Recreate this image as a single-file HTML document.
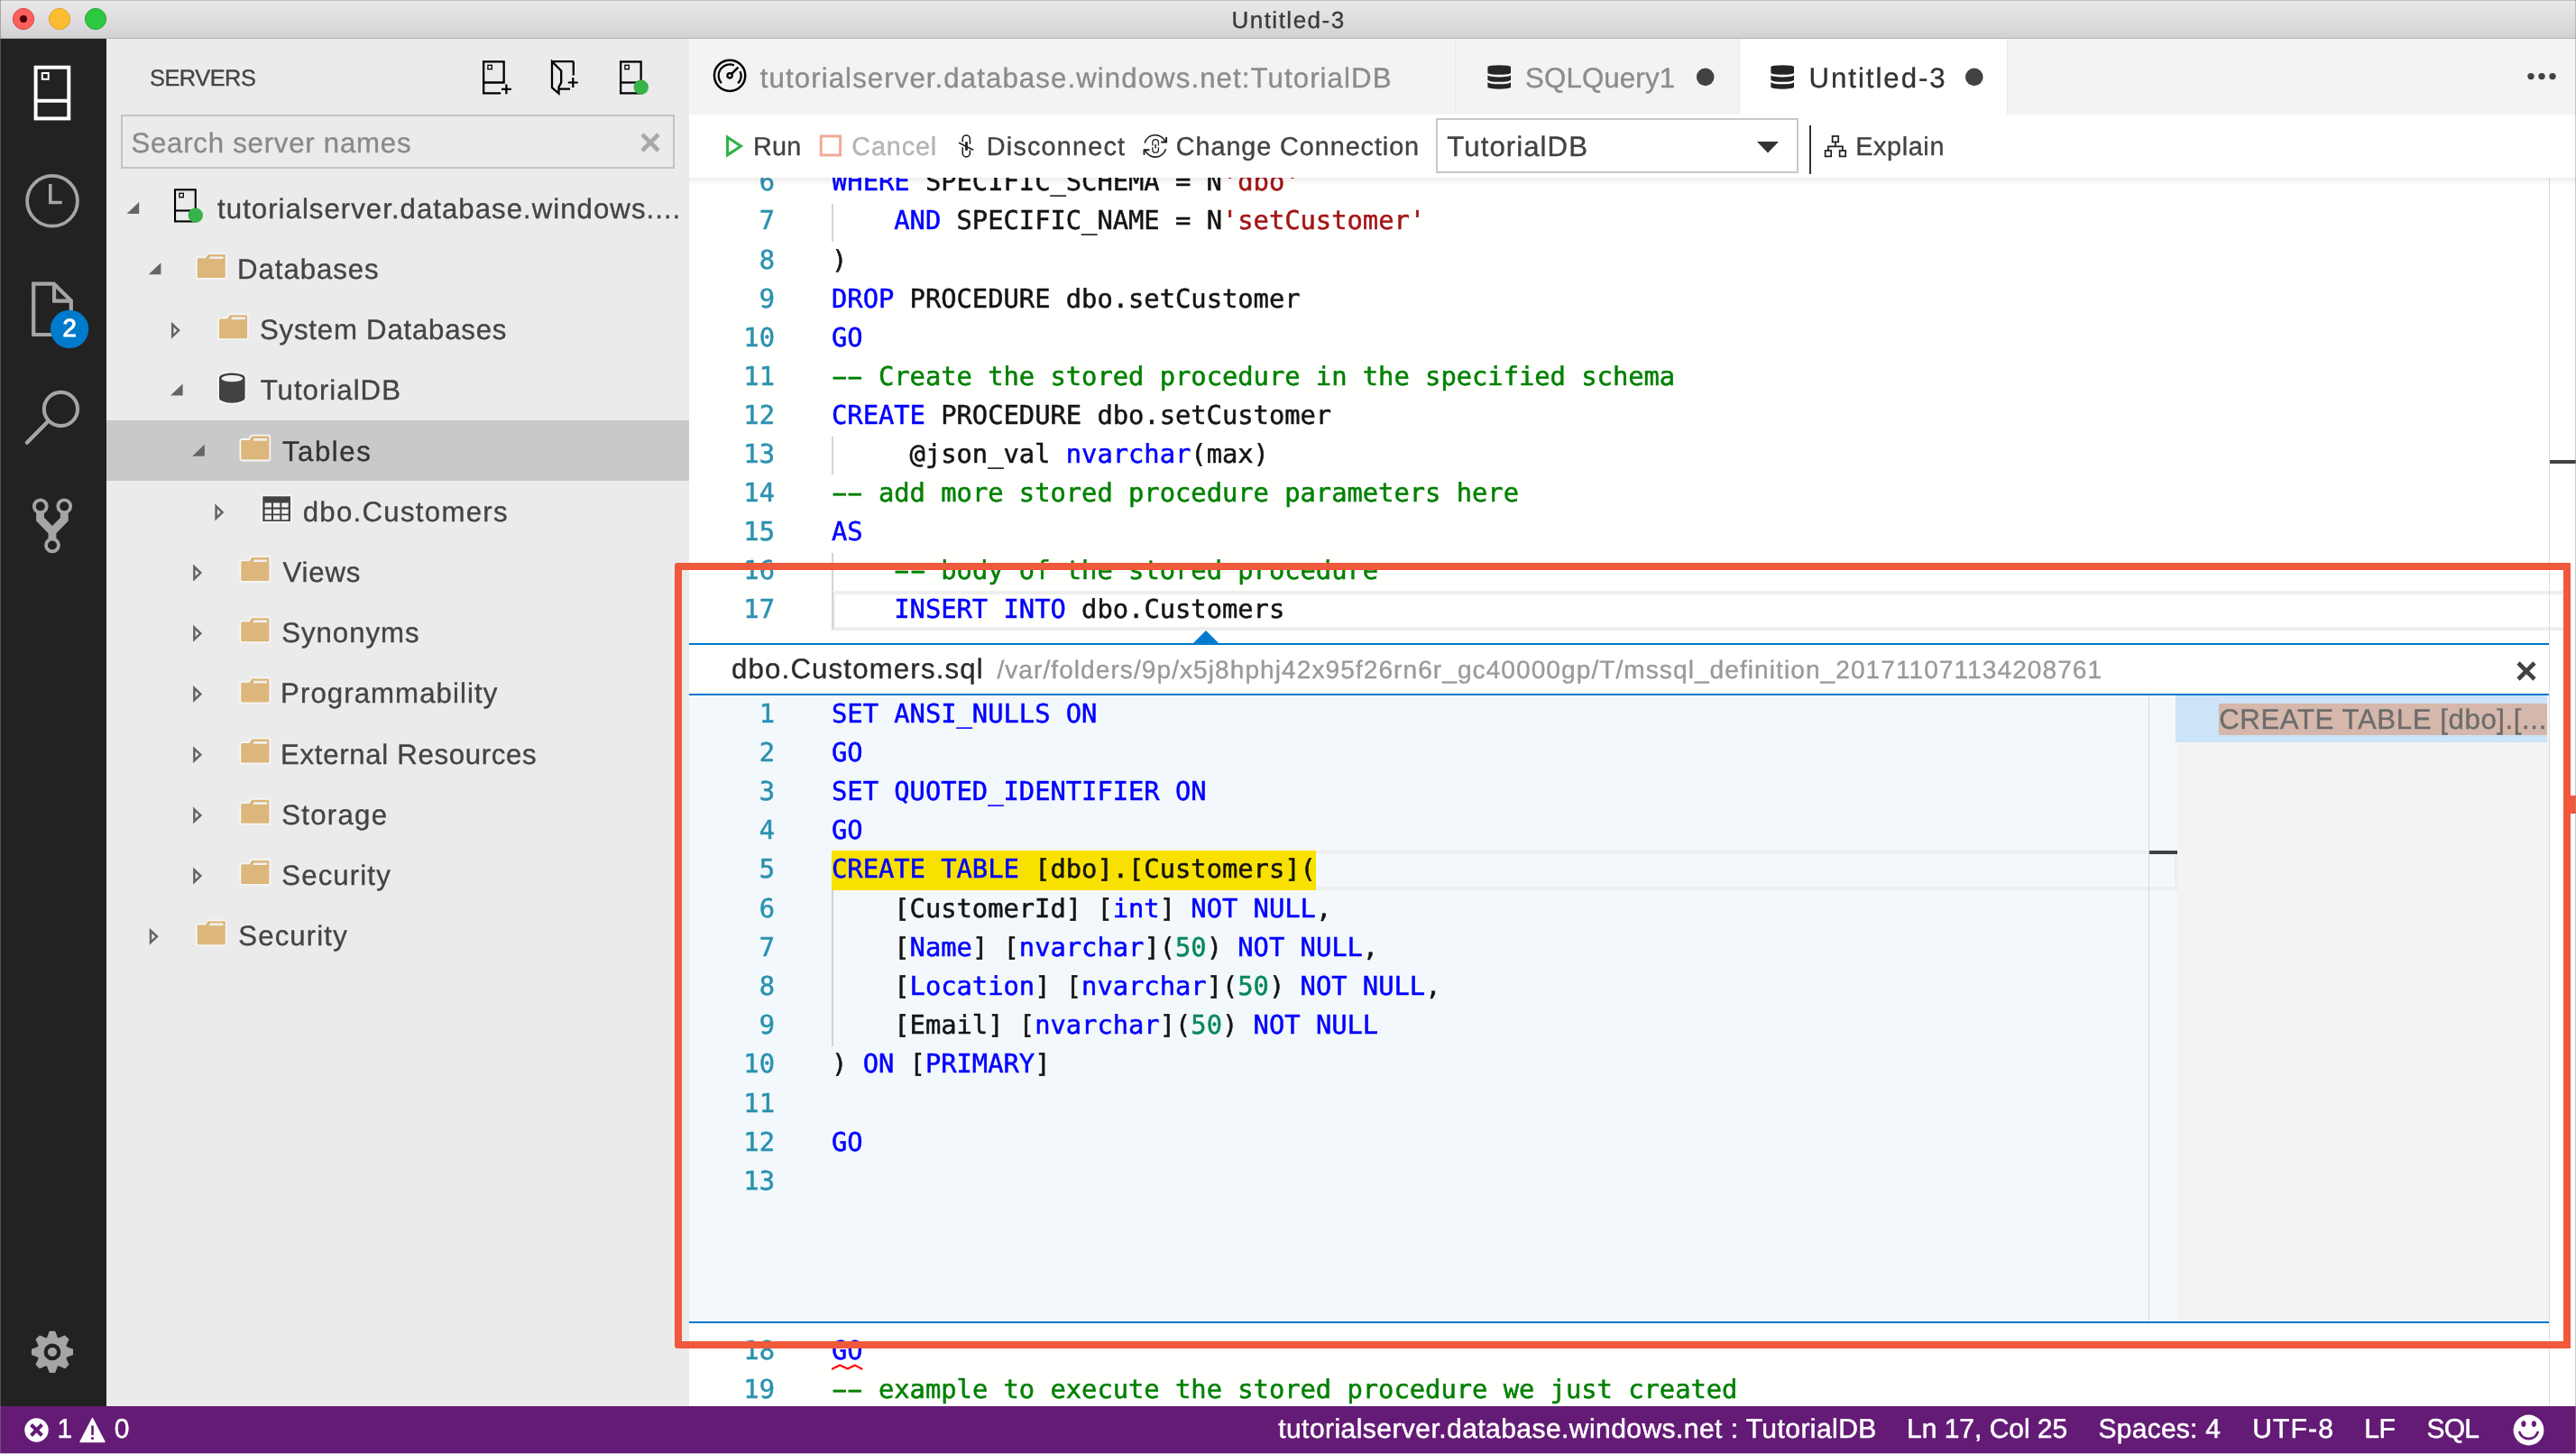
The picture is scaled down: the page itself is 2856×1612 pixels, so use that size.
<!DOCTYPE html>
<html lang="en"><head><meta charset="utf-8"><title>Untitled-3</title>
<style>
*{box-sizing:border-box}
#root{position:absolute;left:0;top:0;width:2856px;height:1612px;will-change:transform}
html,body{margin:0;padding:0}
body{width:2856px;height:1612px;overflow:hidden;background:#fffffe;position:relative;
 font-family:"Liberation Sans",sans-serif;-webkit-font-smoothing:antialiased;text-rendering:geometricPrecision}
.a{position:absolute;display:block}
.t{position:absolute;white-space:pre;line-height:1;-webkit-text-stroke-width:0.35px}
.u{font-family:"Liberation Sans",sans-serif}
.b{font-weight:bold}
.sb{-webkit-text-stroke:0.55px #fff}
.m{font-family:"DejaVu Sans Mono","Liberation Mono",monospace}
.cl{position:absolute;left:922px;white-space:pre;font-family:"DejaVu Sans Mono","Liberation Mono",monospace;
 font-size:28.8px;line-height:43px;height:43px;color:#141414;letter-spacing:-0.02px;-webkit-text-stroke-width:0.5px}
.ln{position:absolute;left:764px;width:95px;text-align:right;white-space:pre;
 font-family:"DejaVu Sans Mono","Liberation Mono",monospace;font-size:28.8px;line-height:43px;height:43px;color:#2b91af;-webkit-text-stroke-width:0.5px}
.hy{display:inline-block;transform:scaleX(1.85)}
.k{color:#0000ff}.s{color:#a31515}.c{color:#008000}.n{color:#09885a}
</style></head>
<body>
<div id="root">
<div class="a" style="left:0px;top:43px;width:118px;height:1517px;background:#222222;"></div>
<svg class="a" style="left:0px;top:0px;" width="118" height="1560" viewBox="0 0 118 1560"><rect x="39.6" y="74.7" width="36.7" height="56.7" fill="none" stroke="#fff" stroke-width="4"/><line x1="39" y1="111.8" x2="77" y2="111.8" stroke="#fff" stroke-width="4"/><rect x="46.8" y="81" width="6.9" height="6.8" fill="none" stroke="#fff" stroke-width="2"/><circle cx="58" cy="222.8" r="27.9" fill="none" stroke="#a5a5a5" stroke-width="3.8"/><path d="M55.8,204 V224.5 H68.8" fill="none" stroke="#a5a5a5" stroke-width="3.6"/><path d="M37.2,314.6 H59.7 L78.8,333.4 V371 H37.2 Z M60.1,314.6 V333.7 H78.8" fill="none" stroke="#a5a5a5" stroke-width="4.2" stroke-linejoin="miter"/><circle cx="77.1" cy="364.9" r="21.2" fill="#007acc"/><circle cx="67.45" cy="453.5" r="18.6" fill="none" stroke="#a5a5a5" stroke-width="4.1"/><line x1="29.9" y1="490.8" x2="53.6" y2="466.7" stroke="#a5a5a5" stroke-width="4.4" stroke-linecap="round"/><path d="M44.55,566 V575.75 L57.95,589.3 L71.3,575.75 V566 M57.95,589.3 V600" fill="none" stroke="#a5a5a5" stroke-width="8.9" stroke-linejoin="miter"/><circle cx="44.8" cy="561.3" r="6.96" fill="#222" stroke="#a5a5a5" stroke-width="3.8"/><circle cx="71.25" cy="561.3" r="6.96" fill="#222" stroke="#a5a5a5" stroke-width="3.8"/><circle cx="58" cy="604.5" r="6.96" fill="#222" stroke="#a5a5a5" stroke-width="3.8"/><path d="M52.77,1483.36 L55.26,1476.57 L60.74,1476.57 L63.23,1483.36 L65.29,1484.21 L71.85,1481.17 L75.73,1485.05 L72.69,1491.61 L73.54,1493.67 L80.33,1496.16 L80.33,1501.64 L73.54,1504.13 L72.69,1506.19 L75.73,1512.75 L71.85,1516.63 L65.29,1513.59 L63.23,1514.44 L60.74,1521.23 L55.26,1521.23 L52.77,1514.44 L50.71,1513.59 L44.15,1516.63 L40.27,1512.75 L43.31,1506.19 L42.46,1504.13 L35.67,1501.64 L35.67,1496.16 L42.46,1493.67 L43.31,1491.61 L40.27,1485.05 L44.15,1481.17 L50.71,1484.21Z" fill="#a5a5a5" stroke="#a5a5a5" stroke-width="1.4" stroke-linejoin="round"/><circle cx="58.0" cy="1498.9" r="7.2" fill="#a5a5a5" stroke="#222" stroke-width="4.4"/></svg>
<span class="t u" style="left:69.5px;top:349.7px;font-size:27.6px;color:#fff;-webkit-text-stroke:1.1px #fff;">2</span>
<div class="a" style="left:118px;top:43px;width:646px;height:1517px;background:#ebebeb;"></div>
<span class="t u" style="left:166.0px;top:75.2px;font-size:25.4px;color:#444444;letter-spacing:-0.50px;">SERVERS</span>
<div class="a" style="left:134px;top:126.8px;width:614px;height:59.8px;border:2px solid #c3c3c3;"></div>
<span class="t u" style="left:145.4px;top:143.1px;font-size:31.2px;color:#8a8a8a;letter-spacing:0.76px;">Search server names</span>
<div class="a" style="left:118px;top:465.79999999999995px;width:646px;height:67.4px;background:#c9c9c9;"></div>
<svg class="a" style="left:118px;top:43px;" width="646" height="1517" viewBox="118 43 646 1517"><path d="M558.65,91.5 V68.45 H536.15 V103.35 H555.2 M535,91.5 H559.8" fill="none" stroke="#000" stroke-width="2.3"/><rect x="540.9" y="72.3" width="4.4" height="4.4" fill="none" stroke="#000" stroke-width="1.3"/><path d="M556,98.8 H566.8 M561.4,93.4 V104.2" stroke="#000" stroke-width="2.2"/><path d="M612,68.2 H634.5 Q635.8,68.2 635.8,69.5 V83.5 M612,68.2 L622.2,78.5 V91.5 L619.5,96.5 V103.6 L612,97.2 Z M620.5,98.6 H632" fill="none" stroke="#000" stroke-width="2.3" stroke-linejoin="miter"/><path d="M629.8,91.5 H640.8 M635.3,86 V97" stroke="#000" stroke-width="2.2"/><rect x="688.15" y="68.45" width="22.50" height="34.90" fill="none" stroke="#000" stroke-width="2.3"/><line x1="687.00" y1="91.50" x2="711.80" y2="91.50" stroke="#000" stroke-width="2.3"/><rect x="692.90" y="72.30" width="4.4" height="4.4" fill="none" stroke="#000" stroke-width="1.3"/><circle cx="710.80" cy="96.70" r="8.2" fill="#37b34a"/><path d="M712,149 L730,167 M730,149 L712,167" stroke="#a9a9a9" stroke-width="4.6"/><path d="M154.20,224.00 V237.00 H140.60 Z" fill="#646465"/><rect x="194.05" y="210.35" width="22.70" height="35.10" fill="none" stroke="#000" stroke-width="2.1"/><line x1="193.00" y1="233.50" x2="217.80" y2="233.50" stroke="#000" stroke-width="2.1"/><rect x="198.90" y="214.30" width="4.4" height="4.4" fill="none" stroke="#000" stroke-width="1.3"/><circle cx="216.80" cy="238.70" r="8.2" fill="#37b34a"/><path d="M178.40,291.20 V304.20 H164.80 Z" fill="#646465"/><g transform="translate(218.70,282.00)"><path d="M11.8,0 H30 Q31.1,0 31.1,1.1 V24.9 Q31.1,26 30,26 H1.1 Q0,26 0,24.9 V5.4 Q0,4.3 1.1,4.3 H9.3 Z" fill="#f6f6f6" stroke="#f6f6f6" stroke-width="3.6" stroke-linejoin="round"/><path d="M11.8,0 H30 Q31.1,0 31.1,1.1 V24.9 Q31.1,26 30,26 H1.1 Q0,26 0,24.9 V5.4 Q0,4.3 1.1,4.3 H9.3 Z" fill="#dcb67a"/><path d="M14.4,2.4 H28.75 V5.1 H13.1 Z" fill="#f0eff1"/></g><path d="M191.20,359.70 L198.10,366.30 L191.20,372.90 Z" fill="none" stroke="#646465" stroke-width="2.5" stroke-linejoin="miter"/><g transform="translate(243.00,349.20)"><path d="M11.8,0 H30 Q31.1,0 31.1,1.1 V24.9 Q31.1,26 30,26 H1.1 Q0,26 0,24.9 V5.4 Q0,4.3 1.1,4.3 H9.3 Z" fill="#f6f6f6" stroke="#f6f6f6" stroke-width="3.6" stroke-linejoin="round"/><path d="M11.8,0 H30 Q31.1,0 31.1,1.1 V24.9 Q31.1,26 30,26 H1.1 Q0,26 0,24.9 V5.4 Q0,4.3 1.1,4.3 H9.3 Z" fill="#dcb67a"/><path d="M14.4,2.4 H28.75 V5.1 H13.1 Z" fill="#f0eff1"/></g><path d="M202.60,425.60 V438.60 H189.00 Z" fill="#646465"/><g transform="translate(243.00,413.40)"><path d="M0,5.6 A14.3,5.6 0 0 1 28.6,5.6 V27.699999999999996 A14.3,5.6 0 0 1 0,27.699999999999996 Z" fill="#f6f6f6" stroke="#f6f6f6" stroke-width="3.4"/><path d="M0,5.6 A14.3,5.6 0 0 1 28.6,5.6 V27.699999999999996 A14.3,5.6 0 0 1 0,27.699999999999996 Z" fill="#424242"/><ellipse cx="14.3" cy="6.199999999999999" rx="11.9" ry="3.6999999999999997" fill="#f0eff1"/></g><path d="M226.80,492.80 V505.80 H213.20 Z" fill="#646465"/><g transform="translate(267.30,483.60)"><path d="M11.8,0 H30 Q31.1,0 31.1,1.1 V24.9 Q31.1,26 30,26 H1.1 Q0,26 0,24.9 V5.4 Q0,4.3 1.1,4.3 H9.3 Z" fill="#f6f6f6" stroke="#f6f6f6" stroke-width="3.6" stroke-linejoin="round"/><path d="M11.8,0 H30 Q31.1,0 31.1,1.1 V24.9 Q31.1,26 30,26 H1.1 Q0,26 0,24.9 V5.4 Q0,4.3 1.1,4.3 H9.3 Z" fill="#dcb67a"/><path d="M14.4,2.4 H28.75 V5.1 H13.1 Z" fill="#f0eff1"/></g><path d="M239.60,561.30 L246.50,567.90 L239.60,574.50 Z" fill="none" stroke="#646465" stroke-width="2.5" stroke-linejoin="miter"/><g transform="translate(291.30,550.30)"><rect x="-1.6" y="-1.6" width="33.9" height="30.9" fill="#f6f6f6"/><rect x="0" y="0" width="30.7" height="27.7" fill="#424242"/><rect x="2.3" y="7.2" width="7.4" height="5.0" fill="#f0eff1"/><rect x="2.3" y="14.3" width="7.4" height="5.0" fill="#f0eff1"/><rect x="2.3" y="21.0" width="7.4" height="5.0" fill="#f0eff1"/><rect x="11.65" y="7.2" width="7.4" height="5.0" fill="#f0eff1"/><rect x="11.65" y="14.3" width="7.4" height="5.0" fill="#f0eff1"/><rect x="11.65" y="21.0" width="7.4" height="5.0" fill="#f0eff1"/><rect x="21.0" y="7.2" width="7.4" height="5.0" fill="#f0eff1"/><rect x="21.0" y="14.3" width="7.4" height="5.0" fill="#f0eff1"/><rect x="21.0" y="21.0" width="7.4" height="5.0" fill="#f0eff1"/></g><path d="M215.40,628.50 L222.30,635.10 L215.40,641.70 Z" fill="none" stroke="#646465" stroke-width="2.5" stroke-linejoin="miter"/><g transform="translate(267.30,618.00)"><path d="M11.8,0 H30 Q31.1,0 31.1,1.1 V24.9 Q31.1,26 30,26 H1.1 Q0,26 0,24.9 V5.4 Q0,4.3 1.1,4.3 H9.3 Z" fill="#f6f6f6" stroke="#f6f6f6" stroke-width="3.6" stroke-linejoin="round"/><path d="M11.8,0 H30 Q31.1,0 31.1,1.1 V24.9 Q31.1,26 30,26 H1.1 Q0,26 0,24.9 V5.4 Q0,4.3 1.1,4.3 H9.3 Z" fill="#dcb67a"/><path d="M14.4,2.4 H28.75 V5.1 H13.1 Z" fill="#f0eff1"/></g><path d="M215.40,695.70 L222.30,702.30 L215.40,708.90 Z" fill="none" stroke="#646465" stroke-width="2.5" stroke-linejoin="miter"/><g transform="translate(267.30,685.20)"><path d="M11.8,0 H30 Q31.1,0 31.1,1.1 V24.9 Q31.1,26 30,26 H1.1 Q0,26 0,24.9 V5.4 Q0,4.3 1.1,4.3 H9.3 Z" fill="#f6f6f6" stroke="#f6f6f6" stroke-width="3.6" stroke-linejoin="round"/><path d="M11.8,0 H30 Q31.1,0 31.1,1.1 V24.9 Q31.1,26 30,26 H1.1 Q0,26 0,24.9 V5.4 Q0,4.3 1.1,4.3 H9.3 Z" fill="#dcb67a"/><path d="M14.4,2.4 H28.75 V5.1 H13.1 Z" fill="#f0eff1"/></g><path d="M215.40,762.90 L222.30,769.50 L215.40,776.10 Z" fill="none" stroke="#646465" stroke-width="2.5" stroke-linejoin="miter"/><g transform="translate(267.30,752.40)"><path d="M11.8,0 H30 Q31.1,0 31.1,1.1 V24.9 Q31.1,26 30,26 H1.1 Q0,26 0,24.9 V5.4 Q0,4.3 1.1,4.3 H9.3 Z" fill="#f6f6f6" stroke="#f6f6f6" stroke-width="3.6" stroke-linejoin="round"/><path d="M11.8,0 H30 Q31.1,0 31.1,1.1 V24.9 Q31.1,26 30,26 H1.1 Q0,26 0,24.9 V5.4 Q0,4.3 1.1,4.3 H9.3 Z" fill="#dcb67a"/><path d="M14.4,2.4 H28.75 V5.1 H13.1 Z" fill="#f0eff1"/></g><path d="M215.40,830.10 L222.30,836.70 L215.40,843.30 Z" fill="none" stroke="#646465" stroke-width="2.5" stroke-linejoin="miter"/><g transform="translate(267.30,819.60)"><path d="M11.8,0 H30 Q31.1,0 31.1,1.1 V24.9 Q31.1,26 30,26 H1.1 Q0,26 0,24.9 V5.4 Q0,4.3 1.1,4.3 H9.3 Z" fill="#f6f6f6" stroke="#f6f6f6" stroke-width="3.6" stroke-linejoin="round"/><path d="M11.8,0 H30 Q31.1,0 31.1,1.1 V24.9 Q31.1,26 30,26 H1.1 Q0,26 0,24.9 V5.4 Q0,4.3 1.1,4.3 H9.3 Z" fill="#dcb67a"/><path d="M14.4,2.4 H28.75 V5.1 H13.1 Z" fill="#f0eff1"/></g><path d="M215.40,897.30 L222.30,903.90 L215.40,910.50 Z" fill="none" stroke="#646465" stroke-width="2.5" stroke-linejoin="miter"/><g transform="translate(267.30,886.80)"><path d="M11.8,0 H30 Q31.1,0 31.1,1.1 V24.9 Q31.1,26 30,26 H1.1 Q0,26 0,24.9 V5.4 Q0,4.3 1.1,4.3 H9.3 Z" fill="#f6f6f6" stroke="#f6f6f6" stroke-width="3.6" stroke-linejoin="round"/><path d="M11.8,0 H30 Q31.1,0 31.1,1.1 V24.9 Q31.1,26 30,26 H1.1 Q0,26 0,24.9 V5.4 Q0,4.3 1.1,4.3 H9.3 Z" fill="#dcb67a"/><path d="M14.4,2.4 H28.75 V5.1 H13.1 Z" fill="#f0eff1"/></g><path d="M215.40,964.50 L222.30,971.10 L215.40,977.70 Z" fill="none" stroke="#646465" stroke-width="2.5" stroke-linejoin="miter"/><g transform="translate(267.30,954.00)"><path d="M11.8,0 H30 Q31.1,0 31.1,1.1 V24.9 Q31.1,26 30,26 H1.1 Q0,26 0,24.9 V5.4 Q0,4.3 1.1,4.3 H9.3 Z" fill="#f6f6f6" stroke="#f6f6f6" stroke-width="3.6" stroke-linejoin="round"/><path d="M11.8,0 H30 Q31.1,0 31.1,1.1 V24.9 Q31.1,26 30,26 H1.1 Q0,26 0,24.9 V5.4 Q0,4.3 1.1,4.3 H9.3 Z" fill="#dcb67a"/><path d="M14.4,2.4 H28.75 V5.1 H13.1 Z" fill="#f0eff1"/></g><path d="M167.00,1031.70 L173.90,1038.30 L167.00,1044.90 Z" fill="none" stroke="#646465" stroke-width="2.5" stroke-linejoin="miter"/><g transform="translate(218.70,1021.20)"><path d="M11.8,0 H30 Q31.1,0 31.1,1.1 V24.9 Q31.1,26 30,26 H1.1 Q0,26 0,24.9 V5.4 Q0,4.3 1.1,4.3 H9.3 Z" fill="#f6f6f6" stroke="#f6f6f6" stroke-width="3.6" stroke-linejoin="round"/><path d="M11.8,0 H30 Q31.1,0 31.1,1.1 V24.9 Q31.1,26 30,26 H1.1 Q0,26 0,24.9 V5.4 Q0,4.3 1.1,4.3 H9.3 Z" fill="#dcb67a"/><path d="M14.4,2.4 H28.75 V5.1 H13.1 Z" fill="#f0eff1"/></g></svg>
<span class="t u" style="left:241.1px;top:215.8px;font-size:31.2px;color:#444444;letter-spacing:1.02px;">tutorialserver.database.windows....</span>
<span class="t u" style="left:263.1px;top:283.0px;font-size:31.2px;color:#444444;letter-spacing:0.92px;">Databases</span>
<span class="t u" style="left:288.0px;top:350.2px;font-size:31.2px;color:#444444;letter-spacing:0.78px;">System Databases</span>
<span class="t u" style="left:288.7px;top:417.4px;font-size:31.2px;color:#444444;letter-spacing:1.01px;">TutorialDB</span>
<span class="t u" style="left:313.0px;top:484.6px;font-size:31.2px;color:#333;letter-spacing:1.53px;">Tables</span>
<span class="t u" style="left:335.7px;top:551.8px;font-size:31.2px;color:#444444;letter-spacing:1.28px;">dbo.Customers</span>
<span class="t u" style="left:313.6px;top:619.0px;font-size:31.2px;color:#444444;letter-spacing:0.78px;">Views</span>
<span class="t u" style="left:312.3px;top:686.2px;font-size:31.2px;color:#444444;letter-spacing:0.94px;">Synonyms</span>
<span class="t u" style="left:311.1px;top:753.4px;font-size:31.2px;color:#444444;letter-spacing:1.06px;">Programmability</span>
<span class="t u" style="left:311.1px;top:820.6px;font-size:31.2px;color:#444444;letter-spacing:0.67px;">External Resources</span>
<span class="t u" style="left:312.3px;top:887.8px;font-size:31.2px;color:#444444;letter-spacing:1.25px;">Storage</span>
<span class="t u" style="left:312.3px;top:955.0px;font-size:31.2px;color:#444444;letter-spacing:1.11px;">Security</span>
<span class="t u" style="left:264.3px;top:1022.2px;font-size:31.2px;color:#444444;letter-spacing:1.11px;">Security</span>
<div class="a" style="left:764px;top:43px;width:2092px;height:84px;background:#f3f3f3;"></div>
<div class="a" style="left:1612.5px;top:43px;width:1.5px;height:84px;background:#e9e9e9;"></div>
<div class="a" style="left:1927.5px;top:43px;width:1.5px;height:84px;background:#e9e9e9;"></div>
<div class="a" style="left:1929px;top:43px;width:295.5px;height:84px;background:#fffffe;"></div>
<div class="a" style="left:2224.5px;top:43px;width:1.5px;height:84px;background:#e9e9e9;"></div>
<svg class="a" style="left:764px;top:43px;" width="2092" height="84" viewBox="764 43 2092 84"><g fill="none" stroke="#000"><circle cx="809.1" cy="83.85" r="17.15" stroke-width="2.5"/><path d="M799.82,92.15 A12.45,12.45 0 0 1 813.82,72.33 M820.62,79.13 A12.45,12.45 0 0 1 818.16,92.39" stroke-width="2.3"/><circle cx="809.1" cy="83.85" r="2.65" stroke-width="2.3"/><path d="M811.36,81.59 L818.43,74.52" stroke-width="2.5"/></g><g transform="translate(1649.4,72.2)" fill="#262427"><path d="M0,2.2 A12.8,2.2 0 0 1 25.6,2.2 V8.45 A12.8,2.2 0 0 1 0,8.45 Z"/><path d="M0,11.0 A12.8,2.2 0 0 0 25.6,11.0 V16.4 A12.8,2.2 0 0 1 0,16.4 Z"/><path d="M0,18.9 A12.8,2.2 0 0 0 25.6,18.9 V24.3 A12.8,2.2 0 0 1 0,24.3 Z"/></g><g transform="translate(1963.4,72.2)" fill="#262427"><path d="M0,2.2 A12.8,2.2 0 0 1 25.6,2.2 V8.45 A12.8,2.2 0 0 1 0,8.45 Z"/><path d="M0,11.0 A12.8,2.2 0 0 0 25.6,11.0 V16.4 A12.8,2.2 0 0 1 0,16.4 Z"/><path d="M0,18.9 A12.8,2.2 0 0 0 25.6,18.9 V24.3 A12.8,2.2 0 0 1 0,24.3 Z"/></g><circle cx="1890.7" cy="85.4" r="9.8" fill="#424242"/><circle cx="2188.8" cy="85.4" r="9.8" fill="#424242"/><circle cx="2806" cy="84.6" r="3.7" fill="#424242"/><circle cx="2818" cy="84.6" r="3.7" fill="#424242"/><circle cx="2830" cy="84.6" r="3.7" fill="#424242"/></svg>
<span class="t u" style="left:842.8px;top:71.0px;font-size:31.2px;color:#8b8b8b;letter-spacing:1.09px;">tutorialserver.database.windows.net:TutorialDB</span>
<span class="t u" style="left:1691.1px;top:71.0px;font-size:31.2px;color:#8b8b8b;letter-spacing:0.15px;">SQLQuery1</span>
<span class="t u" style="left:2005.6px;top:71.0px;font-size:31.2px;color:#333333;letter-spacing:1.95px;">Untitled-3</span>
<div class="a" style="left:764px;top:197px;width:2092px;height:1362px;overflow:hidden">
<div class="a" style="left:-764px;top:-197px;width:2856px;height:1612px">
<div class="a" style="left:922px;top:655.1px;width:1920px;height:43.6px;border:4px solid #eeeeee;border-right:none;"></div>
<div class="a" style="left:922px;top:225.63px;width:2px;height:42.03px;background:#d3d3d3;"></div>
<div class="a" style="left:922px;top:483.81px;width:2px;height:42.03px;background:#d3d3d3;"></div>
<div class="a" style="left:922px;top:612.9000000000001px;width:2px;height:42.03px;background:#d3d3d3;"></div>
<div class="a" style="left:922px;top:655.9300000000001px;width:2px;height:42.03px;background:#d3d3d3;"></div>
<div class="ln" style="top:180.4px">6</div>
<div class="cl" style="top:180.4px"><span class="k">WHERE</span> SPECIFIC_SCHEMA = N<span class="s">'dbo'</span></div>
<div class="ln" style="top:223.4px">7</div>
<div class="cl" style="top:223.4px">    <span class="k">AND</span> SPECIFIC_NAME = N<span class="s">'setCustomer'</span></div>
<div class="ln" style="top:266.5px">8</div>
<div class="cl" style="top:266.5px">)</div>
<div class="ln" style="top:309.5px">9</div>
<div class="cl" style="top:309.5px"><span class="k">DROP</span> PROCEDURE dbo.setCustomer</div>
<div class="ln" style="top:352.5px">10</div>
<div class="cl" style="top:352.5px"><span class="k">GO</span></div>
<div class="ln" style="top:395.6px">11</div>
<div class="cl" style="top:395.6px"><span class="c"><span class="hy">-</span><span class="hy">-</span> Create the stored procedure in the specified schema</span></div>
<div class="ln" style="top:438.6px">12</div>
<div class="cl" style="top:438.6px"><span class="k">CREATE</span> PROCEDURE dbo.setCustomer</div>
<div class="ln" style="top:481.6px">13</div>
<div class="cl" style="top:481.6px">     @json_val <span class="k">nvarchar</span>(max)</div>
<div class="ln" style="top:524.6px">14</div>
<div class="cl" style="top:524.6px"><span class="c"><span class="hy">-</span><span class="hy">-</span> add more stored procedure parameters here</span></div>
<div class="ln" style="top:567.7px">15</div>
<div class="cl" style="top:567.7px"><span class="k">AS</span></div>
<div class="ln" style="top:610.7px">16</div>
<div class="cl" style="top:610.7px">    <span class="c"><span class="hy">-</span><span class="hy">-</span> body of the stored procedure</span></div>
<div class="ln" style="top:653.7px">17</div>
<div class="cl" style="top:653.7px">    <span class="k">INSERT</span> <span class="k">INTO</span> dbo.Customers</div>
<div class="ln" style="top:1475.6px">18</div>
<div class="cl" style="top:1475.6px"><span class="k">GO</span></div>
<div class="ln" style="top:1518.7px">19</div>
<div class="cl" style="top:1518.7px"><span class="c"><span class="hy">-</span><span class="hy">-</span> example to execute the stored procedure we just created</span></div>
<svg class="a" style="left:922px;top:1512.4px;" width="36" height="8" viewBox="0 0 36 8"><path d="M0,5.6 L1,5.6 L9.2,1.6 L17.8,5.6 L26,1.6 L33.4,5.6 L34.4,5.6" fill="none" stroke="#ff0000" stroke-width="2.2" stroke-linejoin="round"/></svg>
<div class="a" style="left:2826px;top:197px;width:1.2px;height:1362px;background:#dcdcdc;"></div>
<div class="a" style="left:2827px;top:510px;width:29px;height:4.2px;background:#424242;"></div>
</div></div>
<div class="a" style="left:764px;top:127px;width:2092px;height:100px;overflow:hidden"><div class="a" style="left:-20px;top:0;width:2140px;height:70px;background:#fffffe;box-shadow:0 2px 8px rgba(0,0,0,0.11)"></div></div>
<div class="a" style="left:1592px;top:131.3px;width:402px;height:61.2px;background:#fffffe;border:2px solid #c8c8c8;"></div>
<svg class="a" style="left:764px;top:127px;" width="2092" height="70" viewBox="764 127 2092 70"><path d="M806.6,152.2 L821.4,162 L806.6,171.8 Z" fill="none" stroke="#2fb344" stroke-width="3.1" stroke-linejoin="miter"/><rect x="910.2" y="151" width="21.4" height="21" fill="none" stroke="#f1a999" stroke-width="3"/><g fill="none" stroke="#1e1e1e" stroke-width="1.55"><path d="M1067.25,157.55 V153.9 A4.08,4.08 0 0 1 1075.4,153.9 V159.8"/><path d="M1067.25,163.3 V170 A4.08,4.08 0 0 0 1075.4,170 V166.6"/><path d="M1063,158.2 L1079.2,166.3"/></g><rect x="1070.1" y="157.25" width="2.75" height="9.55" fill="#1e1e1e"/><g fill="none" stroke="#1e1e1e" stroke-width="1.55"><path d="M1269.07,158.54 A12.2,12.2 0 0 1 1292.34,157.93"/><path d="M1292.53,165.26 A12.2,12.2 0 0 1 1269.26,165.87"/><path d="M1287.2,157.55 H1293.1 V152.1" stroke-width="1.9"/><path d="M1274.4,166.25 H1268.5 V171.7" stroke-width="1.9"/><path d="M1277.85,161.6 V158 A3.27,3.27 0 0 1 1284.4,158 V161.6" stroke-width="1.3"/><path d="M1277.85,163.2 V165.9 A3.27,3.27 0 0 0 1284.4,165.9 V163.2" stroke-width="1.3"/><path d="M1281.1,160 V164.5" stroke-width="1.5"/></g><path d="M1948,157 H1972 L1960,169.4 Z" fill="#333"/><g fill="none" stroke="#1e1e1e" stroke-width="1.7"><rect x="2031.6" y="151" width="6.6" height="6.4"/><rect x="2023.6" y="167" width="6.6" height="6.4"/><rect x="2039.6" y="167" width="6.6" height="6.4"/><path d="M2034.9,157.4 V162.4 M2026.9,167 V162.4 H2042.9 V167"/></g></svg>
<div class="a" style="left:2006px;top:139px;width:2.4px;height:54px;background:#333;"></div>
<span class="t u" style="left:835.1px;top:149.0px;font-size:28.8px;color:#424242;letter-spacing:0.20px;">Run</span>
<span class="t u" style="left:944.3px;top:149.0px;font-size:28.8px;color:#b4b4b4;letter-spacing:0.85px;">Cancel</span>
<span class="t u" style="left:1093.8px;top:149.0px;font-size:28.8px;color:#424242;letter-spacing:1.20px;">Disconnect</span>
<span class="t u" style="left:1303.8px;top:149.0px;font-size:28.8px;color:#424242;letter-spacing:0.92px;">Change Connection</span>
<span class="t u" style="left:1604.3px;top:147.4px;font-size:31.2px;color:#424242;letter-spacing:1.06px;">TutorialDB</span>
<span class="t u" style="left:2057.2px;top:149.0px;font-size:28.8px;color:#424242;letter-spacing:0.63px;">Explain</span>
<svg class="a" style="left:1322px;top:698.7px;" width="30" height="15" viewBox="0 0 30 15"><path d="M0,15 L15,0 L30,15 Z" fill="#007acc"/></svg>
<div class="a" style="left:764px;top:712.9px;width:2062px;height:2.2px;background:#007acc;"></div>
<div class="a" style="left:764px;top:715.1px;width:2062px;height:54px;background:#fffffe;"></div>
<div class="a" style="left:764px;top:768.8px;width:2062px;height:2.2px;background:#007acc;"></div>
<div class="a" style="left:764px;top:771.0px;width:1650px;height:694.2px;background:#f2f8fc;"></div>
<div class="a" style="left:2414px;top:771.0px;width:412px;height:694.2px;background:#f3f3f3;"></div>
<div class="a" style="left:764px;top:1465.0px;width:2062px;height:2.2px;background:#007acc;"></div>
<span class="t u" style="left:811.0px;top:726.2px;font-size:31.2px;color:#2b2b2b;letter-spacing:1.17px;">dbo.Customers.sql</span>
<span class="t u" style="left:1105.4px;top:728.8px;font-size:28.1px;color:#999999;letter-spacing:1.05px;">/var/folders/9p/x5j8hphj42x95f26rn6r_gc40000gp/T/mssql_definition_201711071134208761</span>
<svg class="a" style="left:2789px;top:732px;" width="24" height="24" viewBox="0 0 24 24"><path d="M3,3 L21,21 M21,3 L3,21" stroke="#424242" stroke-width="4.6"/></svg>
<div class="a" style="left:922px;top:943.4px;width:1492px;height:43.6px;border:4px solid #eeeeee;border-right:3px solid #eee;"></div>
<div class="a" style="left:922px;top:943.4px;width:537.4px;height:43.6px;background:#f8e100;"></div>
<div class="a" style="left:922px;top:987.13px;width:2px;height:43.2px;background:#d0d3d6;"></div>
<div class="a" style="left:922px;top:1030.33px;width:2px;height:43.2px;background:#d0d3d6;"></div>
<div class="a" style="left:922px;top:1073.53px;width:2px;height:43.2px;background:#d0d3d6;"></div>
<div class="a" style="left:922px;top:1116.73px;width:2px;height:43.2px;background:#d0d3d6;"></div>
<div class="ln" style="top:769.5px">1</div>
<div class="cl" style="top:769.5px"><span class="k">SET</span> <span class="k">ANSI_NULLS</span> <span class="k">ON</span></div>
<div class="ln" style="top:812.7px">2</div>
<div class="cl" style="top:812.7px"><span class="k">GO</span></div>
<div class="ln" style="top:855.9px">3</div>
<div class="cl" style="top:855.9px"><span class="k">SET</span> <span class="k">QUOTED_IDENTIFIER</span> <span class="k">ON</span></div>
<div class="ln" style="top:899.1px">4</div>
<div class="cl" style="top:899.1px"><span class="k">GO</span></div>
<div class="ln" style="top:942.3px">5</div>
<div class="cl" style="top:942.3px"><span class="k">CREATE</span> <span class="k">TABLE</span> [dbo].[Customers](</div>
<div class="ln" style="top:985.5px">6</div>
<div class="cl" style="top:985.5px">    [CustomerId] [<span class="k">int</span>] <span class="k">NOT</span> <span class="k">NULL</span>,</div>
<div class="ln" style="top:1028.7px">7</div>
<div class="cl" style="top:1028.7px">    [<span class="k">Name</span>] [<span class="k">nvarchar</span>](<span class="n">50</span>) <span class="k">NOT</span> <span class="k">NULL</span>,</div>
<div class="ln" style="top:1071.9px">8</div>
<div class="cl" style="top:1071.9px">    [<span class="k">Location</span>] [<span class="k">nvarchar</span>](<span class="n">50</span>) <span class="k">NOT</span> <span class="k">NULL</span>,</div>
<div class="ln" style="top:1115.1px">9</div>
<div class="cl" style="top:1115.1px">    [Email] [<span class="k">nvarchar</span>](<span class="n">50</span>) <span class="k">NOT</span> <span class="k">NULL</span></div>
<div class="ln" style="top:1158.3px">10</div>
<div class="cl" style="top:1158.3px">) <span class="k">ON</span> [<span class="k">PRIMARY</span>]</div>
<div class="ln" style="top:1201.5px">11</div>
<div class="ln" style="top:1244.7px">12</div>
<div class="cl" style="top:1244.7px"><span class="k">GO</span></div>
<div class="ln" style="top:1287.9px">13</div>
<div class="a" style="left:2382px;top:771.0px;width:1.2px;height:694px;background:#d4d8db;"></div>
<div class="a" style="left:2383px;top:943px;width:31px;height:4.2px;background:#424242;"></div>
<div class="a" style="left:2412px;top:771.0px;width:412px;height:51.6px;background:#cce3f8;"></div>
<div class="a" style="left:2460px;top:779.6px;width:364px;height:35px;background:#d6b7ab;"></div>
<span class="t u" style="left:2460.2px;top:782.4px;font-size:31.2px;color:#6c6c6c;letter-spacing:0.59px;">CREATE TABLE [dbo].[...</span>
<div class="a" style="left:0px;top:1559px;width:2856px;height:53px;background:#641b76;"></div>
<svg class="a" style="left:0px;top:1559px;" width="130" height="53" viewBox="0 0 130 53"><circle cx="40.5" cy="26.5" r="13.2" fill="#fff"/><path d="M34.5,20.5 L46.5,32.5 M46.5,20.5 L34.5,32.5" stroke="#641b76" stroke-width="4"/><path d="M102.5,13.5 L116,39.5 H89 Z" fill="#fff" stroke="#fff" stroke-width="1.5" stroke-linejoin="round"/><path d="M102.5,21.5 V32" stroke="#641b76" stroke-width="2.6"/><circle cx="102.5" cy="35.6" r="1.6" fill="#641b76"/></svg>
<span class="t u" style="left:63.5px;top:1570.4px;font-size:30px;color:#ffffff;-webkit-text-stroke:0.5px #fff;">1</span>
<span class="t u" style="left:126.8px;top:1570.4px;font-size:30px;color:#ffffff;-webkit-text-stroke:0.5px #fff;">0</span>
<span class="t u" style="left:1417.2px;top:1570.4px;font-size:30px;color:#ffffff;letter-spacing:0.45px;-webkit-text-stroke:0.5px #fff;">tutorialserver.database.windows.net : TutorialDB</span>
<span class="t u" style="left:2114.1px;top:1570.4px;font-size:30px;color:#ffffff;letter-spacing:-0.03px;-webkit-text-stroke:0.5px #fff;">Ln 17, Col 25</span>
<span class="t u" style="left:2326.6px;top:1570.4px;font-size:30px;color:#ffffff;letter-spacing:0.23px;-webkit-text-stroke:0.5px #fff;">Spaces: 4</span>
<span class="t u" style="left:2497.2px;top:1570.4px;font-size:30px;color:#ffffff;letter-spacing:1.16px;-webkit-text-stroke:0.5px #fff;">UTF-8</span>
<span class="t u" style="left:2621.2px;top:1570.4px;font-size:30px;color:#ffffff;letter-spacing:-0.25px;-webkit-text-stroke:0.5px #fff;">LF</span>
<span class="t u" style="left:2690.6px;top:1570.4px;font-size:30px;color:#ffffff;letter-spacing:-0.84px;-webkit-text-stroke:0.5px #fff;">SQL</span>
<svg class="a" style="left:2785.5px;top:1568.4px;" width="35" height="35" viewBox="0 0 35 35"><circle cx="17.5" cy="17.5" r="16.9" fill="#fff"/><ellipse cx="11.9" cy="10.6" rx="2.55" ry="3.4" fill="#641b76"/><ellipse cx="23.4" cy="10.6" rx="2.55" ry="3.4" fill="#641b76"/><path d="M7.4,20 A10.7,10.7 0 0 0 27.6,20" fill="none" stroke="#641b76" stroke-width="2.7" stroke-linecap="round"/></svg>
<div class="a" style="left:0;top:0;width:2856px;height:43px;background:linear-gradient(#e9e7e9 0px,#e6e4e6 8px,#d3d1d3 41px);border-bottom:1.5px solid #b3b1b3;border-top:1px solid #c4c2c4"></div>
<svg class="a" style="left:13px;top:8px;" width="26" height="26" viewBox="0 0 26 26"><circle cx="13" cy="13" r="11.6" fill="#fd605c" stroke="#e0443e" stroke-width="1"/><circle cx="13" cy="13" r="4" fill="#4c0002"/></svg>
<svg class="a" style="left:53px;top:8px;" width="26" height="26" viewBox="0 0 26 26"><circle cx="13" cy="13" r="11.6" fill="#febd30" stroke="#dfa033" stroke-width="1"/></svg>
<svg class="a" style="left:93px;top:8px;" width="26" height="26" viewBox="0 0 26 26"><circle cx="13" cy="13" r="11.6" fill="#2dc841" stroke="#26a934" stroke-width="1"/></svg>
<span class="t u" style="left:1365.4px;top:8.8px;font-size:26px;color:#3b3b3b;letter-spacing:1.50px;">Untitled-3</span>
<div class="a" style="left:748px;top:624px;width:2102.4px;height:871px;border:8.6px solid #f0593b;border-radius:3px 1px 1px 3px;"></div>
<div class="a" style="left:2849px;top:882px;width:7px;height:20px;background:#f0593b;"></div>
<div class="a" style="left:0;top:0;width:1px;height:1612px;background:rgba(120,120,120,.55)"></div>
<div class="a" style="left:2855px;top:0;width:1px;height:1612px;background:rgba(150,150,150,.5)"></div>
<div class="a" style="left:0;top:1610.6px;width:2856px;height:1.4px;background:#c3bfc5"></div>
</div>
</body></html>
